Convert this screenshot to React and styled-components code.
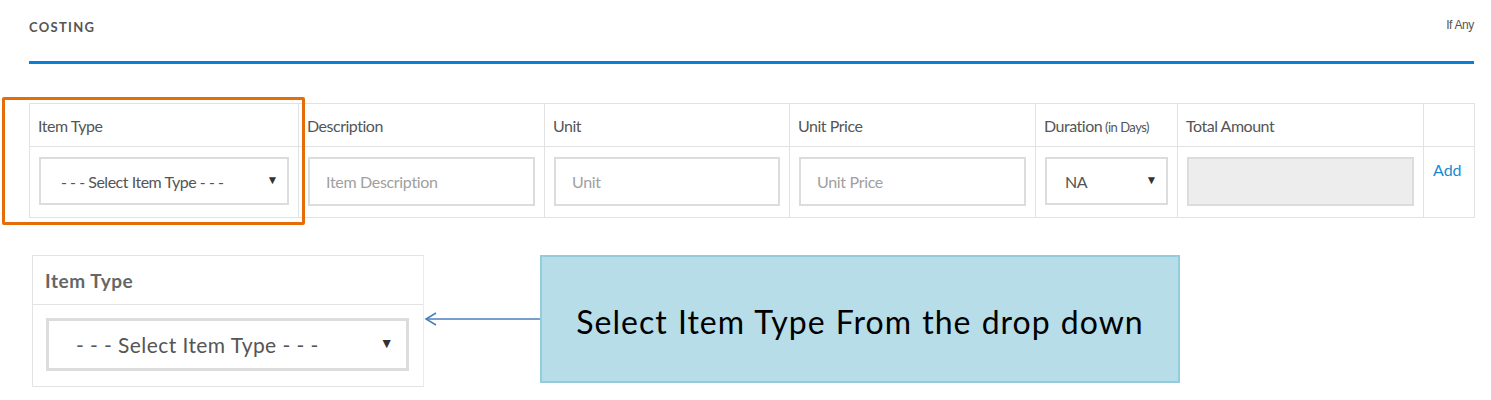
import React from "react";
import styled, { createGlobalStyle } from "styled-components";

const GlobalStyle = createGlobalStyle`
  body {
    margin: 0;
    background: #fff;
    font-family: Lato, "Open Sans", sans-serif;
  }
`;

const columns = [
  { title: "Item Type", width: 269, kind: "select", value: "- - - Select Item Type - - -", pad: 20 },
  { title: "Description", width: 246, kind: "input", value: "Item Description" },
  { title: "Unit", width: 245, kind: "input", value: "Unit" },
  { title: "Unit Price", width: 246, kind: "input", value: "Unit Price" },
  { title: "Duration", note: "(in Days)", width: 142, kind: "select", value: "NA", pad: 18 },
  { title: "Total Amount", width: 246, kind: "readonly" },
  { title: "", width: 51, kind: "link", value: "Add" },
];

function App() {
  return (
    <Page>
      <GlobalStyle />
      <Section>
        <Heading>
          <Title>COSTING</Title>
          <Hint>If Any</Hint>
        </Heading>
        <Rule />
        <TableWrap>
          <Table>
            <colgroup>
              {columns.map((c, i) => (
                <col key={i} style={{ width: c.width }} />
              ))}
            </colgroup>
            <thead>
              <tr>
                {columns.map((c, i) => (
                  <Th key={i}>
                    {c.title}
                    {c.note && <Small> {c.note}</Small>}
                  </Th>
                ))}
              </tr>
            </thead>
            <tbody>
              <tr>
                {columns.map((c, i) => (
                  <Td key={i}>
                    {c.kind === "select" && (
                      <Select $pad={c.pad}>
                        <span>{c.value}</span>
                        <Caret>▼</Caret>
                      </Select>
                    )}
                    {c.kind === "input" && <Input placeholder={c.value} />}
                    {c.kind === "readonly" && <Input readOnly $disabled />}
                    {c.kind === "link" && <AddLink>{c.value}</AddLink>}
                  </Td>
                ))}
              </tr>
            </tbody>
          </Table>
          <Highlight />
        </TableWrap>
      </Section>

      <Callout>
        <ZoomCell>
          <ZoomHead>Item Type</ZoomHead>
          <ZoomBody>
            <ZoomSelect>
              <span>- - - Select Item Type - - -</span>
              <ZoomCaret>▼</ZoomCaret>
            </ZoomSelect>
          </ZoomBody>
        </ZoomCell>
        <Arrow width="116" height="20" viewBox="0 0 116 20">
          <line x1="2" y1="10" x2="116" y2="10" stroke="#4a7ebb" strokeWidth="1.5" />
          <polyline points="12,4 2,10 12,16" fill="none" stroke="#4a7ebb" strokeWidth="1.5" />
        </Arrow>
        <Note>Select Item Type From the drop down</Note>
      </Callout>
    </Page>
  );
}

const Page = styled.div`
  width: 1491px;
  height: 400px;
  overflow: hidden;
`;

const Section = styled.div`
  padding: 17px 17px 0 29px;
`;

const Heading = styled.div`
  display: flex;
  justify-content: space-between;
  align-items: flex-start;
  height: 44px;
`;

const Title = styled.div`
  font-size: 13px;
  font-weight: 700;
  letter-spacing: 0.1em;
  color: #555;
  padding-top: 2px;
`;

const Hint = styled.div`
  font-family: "Liberation Sans", Arial, sans-serif;
  font-size: 12px;
  color: #555;
  letter-spacing: -0.03em;
  padding-top: 1px;
`;

const Rule = styled.div`
  height: 3px;
  background: #0a7fd6;
  margin-bottom: 39px;
`;

const TableWrap = styled.div`
  position: relative;
`;

const Table = styled.table`
  width: 100%;
  border-collapse: collapse;
  table-layout: fixed;
`;

const Th = styled.th`
  box-sizing: border-box;
  border: 1px solid #e2e2e2;
  height: 43px;
  padding: 0 8px;
  text-align: left;
  font-size: 16px;
  font-weight: 400;
  color: #555;
  letter-spacing: -0.03em;
  white-space: nowrap;
`;

const Small = styled.span`
  font-size: 13px;
  letter-spacing: -0.04em;
`;

const Td = styled.td`
  border: 1px solid #e2e2e2;
  height: 71px;
  padding: 10px 9px 10px 9px;
  vertical-align: top;
  box-sizing: border-box;
`;

const Input = styled.input`
  box-sizing: border-box;
  display: block;
  width: 100%;
  height: 49px;
  border: 2px solid #dcdcdc;
  background: ${(p) => (p.$disabled ? "#ededed" : "#fff")};
  padding: 0 16px;
  font-family: Lato, sans-serif;
  font-size: 16px;
  letter-spacing: -0.02em;
  color: #555;
  outline: none;
  &::placeholder {
    color: #a0a0a0;
  }
`;

const Select = styled.div`
  box-sizing: border-box;
  height: 48px;
  border: 2px solid #dcdcdc;
  display: flex;
  align-items: center;
  justify-content: space-between;
  padding: 0 9px 0 ${(p) => p.$pad}px;
  font-size: 16px;
  color: #555;
  letter-spacing: -0.03em;
`;

const Caret = styled.span`
  font-size: 12px;
  color: #333;
  margin-top: -4px;
`;

const AddLink = styled.a`
  display: block;
  font-size: 16px;
  color: #1a8ad4;
  padding-top: 3px;
`;

const Highlight = styled.div`
  position: absolute;
  left: -27px;
  top: -6px;
  width: 303px;
  height: 128px;
  border: 3px solid #e46c0a;
  border-radius: 2px;
  box-sizing: border-box;
`;

const Callout = styled.div`
  display: flex;
  align-items: flex-start;
  margin-top: 37px;
  padding-left: 32px;
`;

const ZoomCell = styled.div`
  width: 392px;
  border: 1px solid #e3e3e3;
  border-right-color: #ebebeb;
  box-sizing: border-box;
`;

const ZoomHead = styled.div`
  height: 48px;
  border-bottom: 1px solid #e3e3e3;
  display: flex;
  align-items: center;
  padding-left: 12px;
  font-size: 19px;
  font-weight: 700;
  letter-spacing: 0.03em;
  color: #666;
`;

const ZoomBody = styled.div`
  height: 81px;
  padding: 13px 14px 0 13px;
  box-sizing: border-box;
`;

const ZoomSelect = styled.div`
  box-sizing: border-box;
  height: 53px;
  border: 3px solid #dcdcdc;
  display: flex;
  align-items: center;
  justify-content: space-between;
  padding: 0 12px 0 27px;
  font-size: 21px;
  letter-spacing: 0.02em;
  color: #555;
`;

const ZoomCaret = styled.span`
  font-size: 14px;
  color: #333;
  margin-top: -4px;
`;

const Arrow = styled.svg`
  margin-top: 54px;
  display: block;
`;

const Note = styled.div`
  width: 640px;
  height: 128px;
  box-sizing: border-box;
  background: #b7dde8;
  border: 2px solid #93cddd;
  display: flex;
  align-items: center;
  justify-content: center;
  font-family: Lato, "Open Sans", sans-serif;
  font-size: 32px;
  letter-spacing: 1px;
  word-spacing: 1px;
  color: #000;
  padding-top: 4px;
`;

export default App;
